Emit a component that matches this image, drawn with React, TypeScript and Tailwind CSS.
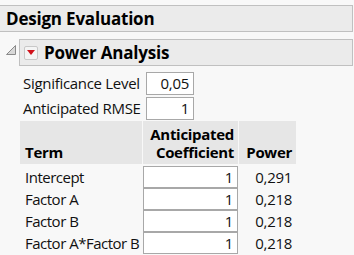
import React from "react";

const font = { fontFamily: '"Open Sans", "Noto Sans", sans-serif' };

function Input({ value, className }: { value: string; className: string }) {
  return (
    <div className={`bg-white border border-[#a8a8a8] flex items-center justify-end pr-[4px] text-[15px] tracking-[-0.3px] text-[#111] ${className}`}>
      {value}
    </div>
  );
}

export default function App() {
  const rows = [
    ["Intercept", "1", "0,291"],
    ["Factor A", "1", "0,218"],
    ["Factor B", "1", "0,218"],
    ["Factor A*Factor B", "1", "0,218"],
  ];
  return (
    <div className="w-[354px] h-[255px] bg-[#f8f8f8] overflow-hidden text-[#111]" style={font}>
      <div className="pt-[5px]">
        <div className="ml-[-4px] w-[357px] h-[27px] bg-[#ebebeb] border border-[#c0c0c0] flex items-center pl-[9px]">
          <span className="text-[17px] font-bold tracking-[-0.2px] text-black leading-[20px]">Design Evaluation</span>
        </div>
      </div>
      <div className="flex items-center mt-[7px]">
        <div className="w-[19px] h-[27px] flex items-center">
          <svg width="19" height="27" viewBox="0 0 19 27">
            <polygon points="15.5,6.5 15.5,15.5 6.5,15.5" fill="#d8d8d8" stroke="#8a8a8a" strokeWidth="1" />
          </svg>
        </div>
        <div className="w-[334px] h-[27px] bg-[#ebebeb] border border-[#c0c0c0] flex items-center pl-[4px]">
          <div className="w-[14px] h-[14px] bg-[#f4f4f4] border border-[#c8c8c8] rounded-[2px] flex items-center justify-center">
            <svg width="8" height="5" viewBox="0 0 8 5">
              <polygon points="0,0 8,0 4,5" fill="#d0121b" />
            </svg>
          </div>
          <span className="ml-[6px] text-[17px] font-bold tracking-[-0.2px] text-black leading-[20px]">Power Analysis</span>
        </div>
      </div>
      <div className="pl-[20px] mt-[6px]">
        <div className="flex items-center h-[23px]">
          <span className="w-[126px] pl-[3px] text-[15px] tracking-[-0.3px]">Significance Level</span>
          <Input value="0,05" className="w-[48px] h-[23px]" />
        </div>
        <div className="flex items-center h-[23px] mt-[2px]">
          <span className="w-[126px] pl-[3px] text-[15px] tracking-[-0.3px]">Anticipated RMSE</span>
          <Input value="1" className="w-[48px] h-[23px]" />
        </div>
        <div className="mt-[1px] flex h-[43px] text-[15px] font-bold tracking-[-0.3px] text-black leading-[18px]">
          <div className="w-[122px] bg-[#e6e6e6] flex items-end pl-[5px] pb-[3px]">Term</div>
          <div className="w-[95px] ml-[1px] bg-[#e6e6e6] flex flex-col items-end justify-end pr-[4px] pb-[3px] text-right">
            <span>Anticipated</span>
            <span>Coefficient</span>
          </div>
          <div className="w-[57px] ml-[1px] bg-[#e6e6e6] flex items-end justify-end pr-[4px] pb-[3px]">Power</div>
        </div>
        <div className="mt-[2px]">
          {rows.map(([t, c, p]) => (
            <div key={t} className="flex items-center h-[22px] text-[15px] tracking-[-0.3px]">
              <span className="w-[123px] pl-[5px] tracking-[-0.5px] whitespace-nowrap">{t}</span>
              <Input value={c} className="w-[95px] h-[22px]" />
              <span className="w-[54px] text-right">{p}</span>
            </div>
          ))}
        </div>
      </div>
    </div>
  );
}
